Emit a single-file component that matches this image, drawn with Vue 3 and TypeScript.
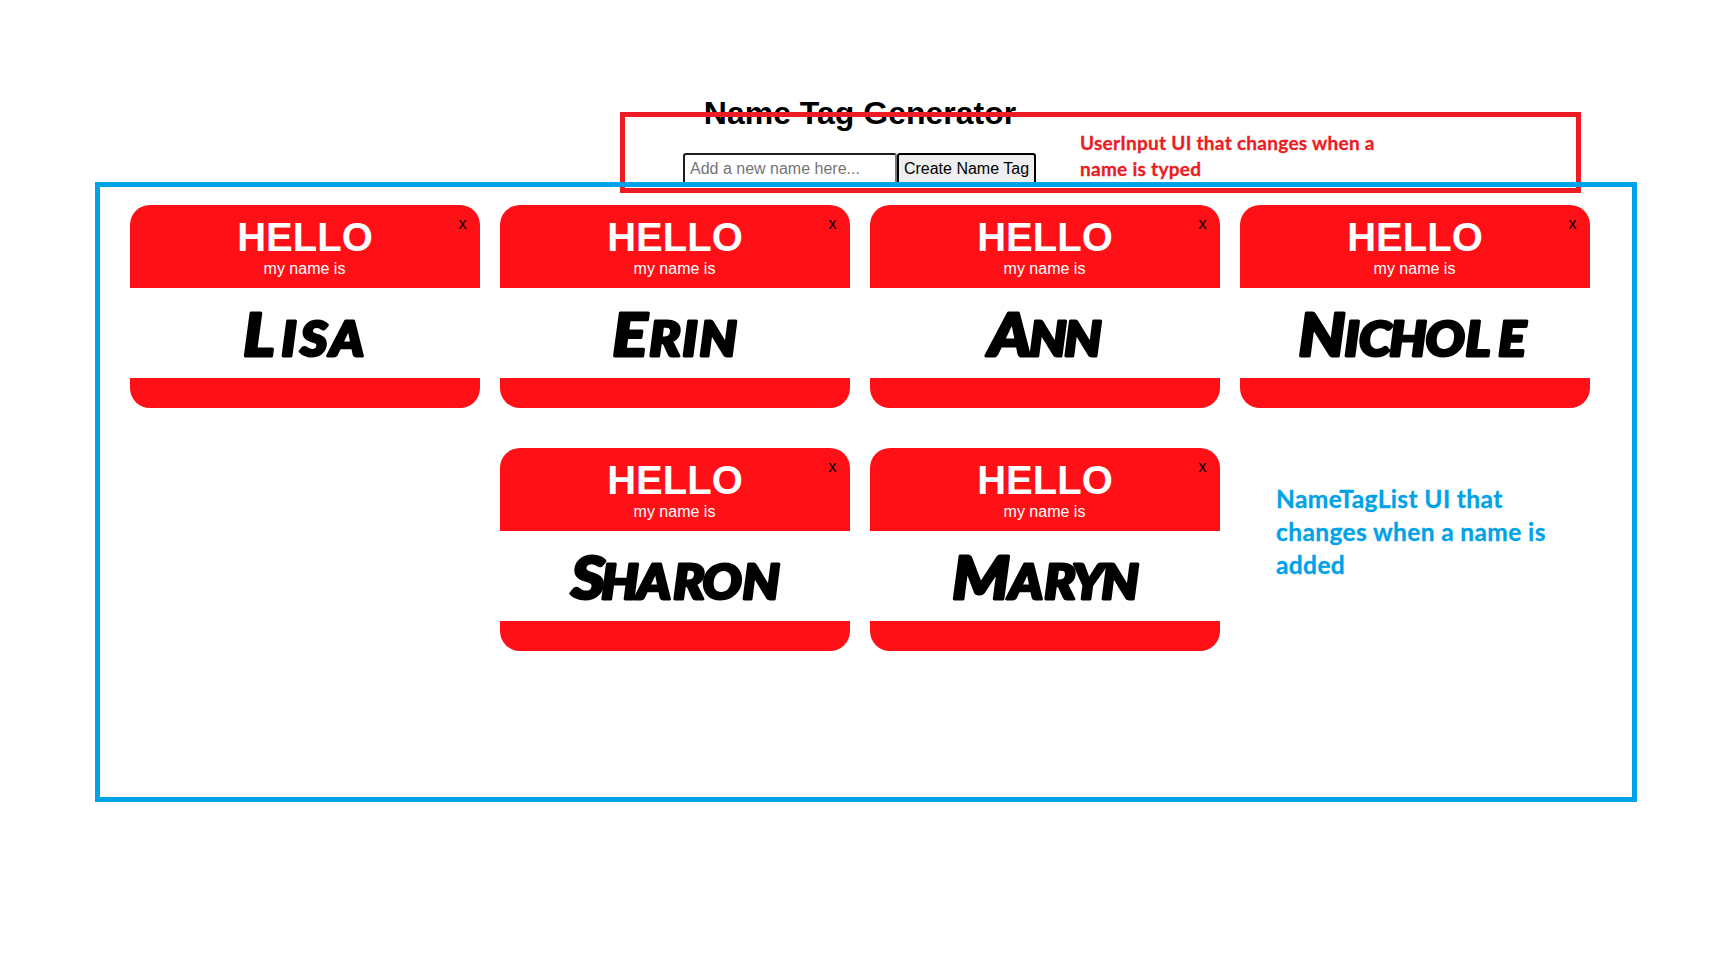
<script setup lang="ts">
import { ref } from 'vue'

interface NameTag {
  name: string
  // horizontal centre of every letter, on a 350px wide tag
  centers: number[]
}

// the marker lettering is drawn wider than the font's own shapes
const STRETCH = 1.1

const newName = ref('')

const tags = ref<NameTag[]>([
  { name: 'Lisa', centers: [129, 159, 184, 217] },
  { name: 'Erin', centers: [130, 165, 190, 218] },
  { name: 'Ann', centers: [140, 178, 213] },
  { name: 'Nichole', centers: [82, 112, 135, 168, 205, 238, 272] },
  { name: 'Sharon', centers: [88, 120, 154, 189, 222, 261] },
  { name: 'Maryn', centers: [111, 156, 190, 218, 250] },
])

function letterPositions(tag: NameTag): string {
  return tag.centers.map((x) => (x / STRETCH).toFixed(1)).join(' ')
}

function addTag(): void {
  const name = newName.value.trim()
  if (!name) return
  const start = 175 - ((name.length - 1) * 35) / 2
  tags.value.push({ name, centers: [...name].map((_, i) => start + i * 35) })
  newName.value = ''
}

function removeTag(index: number): void {
  tags.value.splice(index, 1)
}
</script>

<template>
  <main class="page">
    <h1 class="title">Name Tag Generator</h1>
    <form class="entry" @submit.prevent="addTag">
      <input v-model="newName" class="entry-input" type="text" placeholder="Add a new name here..." />
      <button class="entry-button" type="submit">Create Name Tag</button>
    </form>

    <section class="tags">
      <article v-for="(tag, index) in tags" :key="index" class="tag">
        <button class="tag-close" type="button" @click="removeTag(index)">x</button>
        <header class="tag-head">
          <h2 class="hello">HELLO</h2>
          <p class="intro">my name is</p>
        </header>
        <svg class="tag-name" viewBox="0 0 350 90" width="350" height="90">
          <text :x="letterPositions(tag)" y="68" :transform="`scale(${STRETCH} 1)`"><tspan class="initial">{{ tag.name.charAt(0) }}</tspan><tspan class="rest">{{ tag.name.slice(1) }}</tspan></text>
        </svg>
      </article>
    </section>

    <aside class="note note-input">
      <p class="note-text">UserInput UI that changes when a<br />name is typed</p>
    </aside>
    <aside class="note note-list">
      <p class="note-text">NameTagList UI that<br />changes when a name is<br />added</p>
    </aside>
  </main>
</template>

<style>
body {
  margin: 0;
  background: #fff;
}
</style>

<style scoped>
.page {
  position: relative;
  box-sizing: border-box;
  width: 1720px;
  height: 954px;
  padding-top: 95px;
  overflow: hidden;
  font-family: 'Liberation Sans', Arial, sans-serif;
  font-size: 16px;
  color: #000;
}

.title {
  margin: 0;
  font-size: 32px;
  line-height: 36px;
  text-align: center;
}

.entry {
  display: flex;
  justify-content: center;
  margin-top: 22px;
  padding-right: 1px;
  height: 32px;
}

.entry-input,
.entry-button {
  box-sizing: border-box;
  height: 32px;
  margin: 0;
  padding: 5px;
  border: 2px solid #000;
  border-radius: 3px;
  font: inherit;
  white-space: nowrap;
}

.entry-input {
  width: 214px;
  border-color: #1e1e1e #767676 #1e1e1e #1e1e1e;
  background: #fff;
}

.entry-input::placeholder {
  color: #757575;
}

.entry-button {
  width: 139px;
  padding: 0;
  background: #efefef;
}

.tags {
  display: flex;
  flex-wrap: wrap;
  justify-content: center;
  gap: 40px 20px;
  width: 1460px;
  margin: 20px auto 0;
}

.tag {
  position: relative;
  width: 350px;
  height: 203px;
  border-radius: 20px;
  overflow: hidden;
  background: #ff1016;
}

.tag-close {
  position: absolute;
  top: 10px;
  right: 13.5px;
  padding: 0;
  border: 0;
  background: none;
  font: inherit;
  line-height: 18px;
}

.tag-head {
  box-sizing: border-box;
  height: 83px;
  padding-top: 9px;
  color: #fff;
  text-align: center;
}

.hello {
  margin: 0;
  font-size: 40px;
  line-height: 46px;
}

.intro {
  margin: 0;
  padding-right: 1px;
  line-height: 18px;
}

.tag-name {
  display: block;
  background: #fff;
  font-family: Lato, 'Open Sans', sans-serif;
  font-style: italic;
  font-weight: 900;
  text-anchor: middle;
  text-transform: uppercase;
  stroke: #000;
  stroke-width: 3px;
  stroke-linejoin: round;
}

.initial {
  font-size: 59px;
}

.rest {
  font-size: 47px;
}

.note {
  position: absolute;
  box-sizing: border-box;
  border: 5px solid currentColor;
  font-family: Lato, sans-serif;
  font-weight: 700;
  -webkit-text-stroke: 0.3px currentColor;
  pointer-events: none;
}

.note-text {
  margin: 0;
  white-space: nowrap;
}

.note-input {
  top: 112px;
  left: 620px;
  width: 961px;
  height: 81px;
  padding: 13px 0 0 455px;
  color: #ed1c24;
  font-size: 19px;
  line-height: 26px;
  letter-spacing: 0.28px;
}

.note-list {
  top: 182px;
  left: 95px;
  width: 1542px;
  height: 620px;
  padding: 295px 0 0 1176px;
  color: #00a2e8;
  font-size: 24.5px;
  line-height: 33px;
  letter-spacing: 0.38px;
}
</style>
